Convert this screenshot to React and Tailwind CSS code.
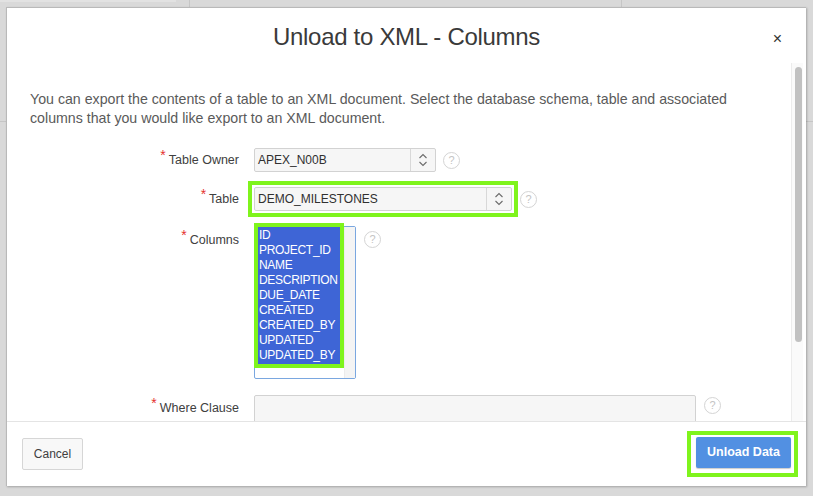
import React from 'react';

const font = { fontFamily: '"Liberation Sans", Arial, sans-serif' };

function Help() {
    return (
        <div className="w-[17px] h-[17px] rounded-full border border-[#d4d4d4] flex items-center justify-center text-[11px] text-[#c4c4c4] leading-none shrink-0">
            ?
        </div>
    );
}

function Label({ children }) {
    return (
        <div className="w-[208px] shrink-0 flex justify-end items-start text-[12.5px] text-[#404040]">
            <span className="text-[#e5312f] text-[14px] leading-none mr-[3px] -mt-[3px]">*</span>
            <span>{children}</span>
        </div>
    );
}

function Chevrons() {
    return (
        <svg width="10" height="14" viewBox="0 0 10 14" fill="none" stroke="#6b6b6b" strokeWidth="1.1">
            <path d="M1.5 5 L5 1.5 L8.5 5" />
            <path d="M1.5 9 L5 12.5 L8.5 9" />
        </svg>
    );
}

function Select({ value, width }) {
    return (
        <div className={`${width} h-[24px] flex border border-[#d2d2d2] rounded-[2px] bg-[#f6f6f6]`}>
            <div className="flex-1 flex items-center pl-[3px] text-[12px] text-[#303030]">{value}</div>
            <div className="w-[25px] border-l border-[#d8d8d8] flex items-center justify-center">
                <Chevrons />
            </div>
        </div>
    );
}

const columns = ['ID', 'PROJECT_ID', 'NAME', 'DESCRIPTION', 'DUE_DATE', 'CREATED', 'CREATED_BY', 'UPDATED', 'UPDATED_BY'];

function App() {
    return (
        <div className="w-[813px] h-[496px] bg-[#d9d9d9] relative overflow-hidden pt-[7px] pl-[6px]" style={font}>
            <div className="absolute left-0 top-0 w-[176px] h-[2px] bg-[#e2e2e2]" />
            <div className="absolute left-[189px] top-0 w-px h-[7px] bg-[#c6c6c6]" />
            <div className="absolute left-[621px] top-0 w-px h-[7px] bg-[#c6c6c6]" />
            <div className="absolute left-0 top-[121px] w-[6px] h-px bg-[#c6c6c6]" />
            <div className="absolute right-0 top-[121px] w-[7px] h-px bg-[#c6c6c6]" />

            <div className="relative w-[800px] h-[479px] bg-white border-t border-l border-[#b9b9b9] shadow-[1px_1px_2px_rgba(0,0,0,0.25)] flex flex-col">
                <div className="h-[55px] shrink-0 flex items-center justify-center relative">
                    <h1 className="text-[24px] text-[#3a3a3a] tracking-[-0.3px] mt-[2px]">
                        Unload to XML - Columns
                    </h1>
                    <span className="absolute right-[24px] top-[19px] text-[16px] text-[#333]">×</span>
                </div>

                <div className="flex-1 flex overflow-hidden">
                    <div className="flex-1 pt-[27px] pl-[23px] pr-[16px]">
                        <p className="w-[712px] text-[14.2px] leading-[19px] text-[#5a5a5a]">
                            You can export the contents of a table to an XML document. Select the database schema, table and associated columns that you would like export to an XML document.
                        </p>

                        <div className="mt-[20px] ml-[1px] flex flex-col">
                            <div className="flex items-center">
                                <Label>Table Owner</Label>
                                <div className="ml-[15px] flex items-center gap-[7px]">
                                    <Select value="APEX_N00B" width="w-[182px]" />
                                    <Help />
                                </div>
                            </div>

                            <div className="flex items-center mt-[15px]">
                                <Label>Table</Label>
                                <div className="ml-[15px] flex items-center gap-[8px]">
                                    <div className="outline-[4px] outline-solid outline-[#7ff41c] outline-offset-[2px]">
                                        <Select value="DEMO_MILESTONES" width="w-[258px]" />
                                    </div>
                                    <Help />
                                </div>
                            </div>

                            <div className="flex items-start mt-[15px]">
                                <div className="pt-[5px]"><Label>Columns</Label></div>
                                <div className="ml-[15px] flex items-start gap-[8px]">
                                    <div className="w-[102px] h-[153px] border border-[#7aa7e0] rounded-[2px] flex bg-white">
                                        <div className="flex-1">
                                            <div className="-mt-[4px] -ml-[1px] w-[90px] border-4 border-[#7ff41c] bg-[#3e65d6] pt-[1px] pb-[1px]">
                                                {columns.map(c => (
                                                    <div key={c} className="h-[15px] leading-[15px] text-[12px] text-white pl-[1px] whitespace-nowrap overflow-hidden tracking-[-0.3px]">
                                                        {c}
                                                    </div>
                                                ))}
                                            </div>
                                        </div>
                                        <div className="w-[11px] bg-[#f4f4f4] border-l border-[#ececec]" />
                                    </div>
                                    <div className="pt-[5px]"><Help /></div>
                                </div>
                            </div>

                            <div className="flex items-start mt-[16px]">
                                <div className="pt-[4px]"><Label>Where Clause</Label></div>
                                <div className="ml-[15px] flex items-start gap-[8px]">
                                    <div className="w-[442px] h-[50px] border border-[#d2d2d2] rounded-[2px] bg-[#f6f6f6]" />
                                    <div className="pt-[2px]"><Help /></div>
                                </div>
                            </div>
                        </div>
                    </div>

                    <div className="w-[12px] mr-[3px] bg-[#fafafa] border-l border-[#ececec] pt-[4px] pl-[3px] pr-[1px]">
                        <div className="h-[275px] rounded-full bg-[#c1c1c1]" />
                    </div>
                </div>

                <div className="h-[65px] shrink-0 border-t border-[#e4e4e4] flex items-center justify-between pl-[15px] pr-[8px] bg-white">
                    <button className="w-[61px] h-[32px] bg-[#f8f8f8] border border-[#d6d6d6] rounded-[2px] text-[12px] text-[#404040]">
                        Cancel
                    </button>
                    <div className="border-4 border-[#7ff41c] pl-[5px] pr-[3px] pt-[2px] pb-[5px] bg-white">
                        <button className="w-[95px] h-[31px] bg-[#5290e2] rounded-[2px] text-[12.5px] font-bold text-white shadow-[0_1px_1px_rgba(0,0,0,0.2)]">
                            Unload Data
                        </button>
                    </div>
                </div>
            </div>
        </div>
    );
}

export default App;
